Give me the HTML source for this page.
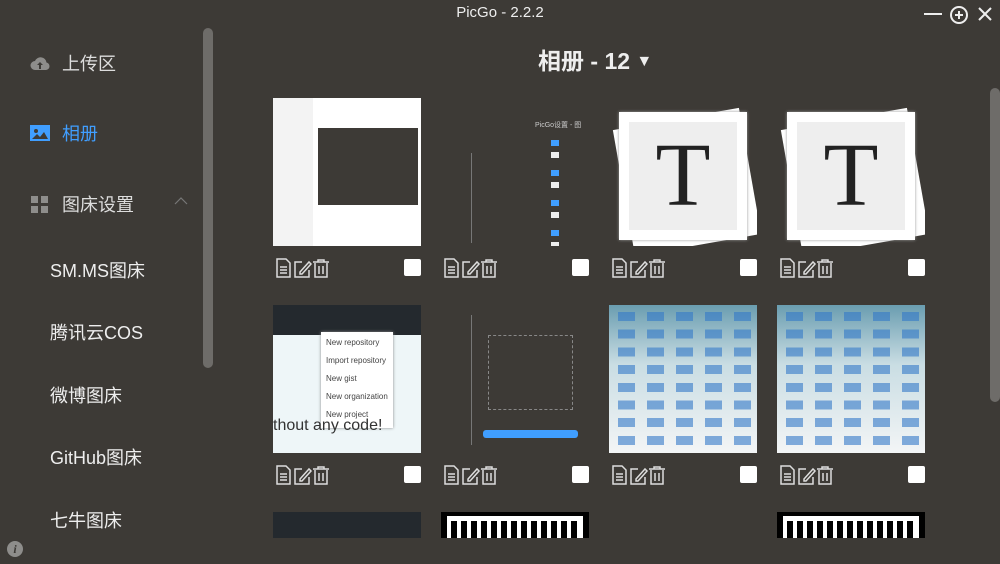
<!DOCTYPE html>
<html><head><meta charset="utf-8"><style>
*{margin:0;padding:0;box-sizing:border-box}
html,body{overflow:hidden}
body{width:1000px;height:564px;background:#3d3a36;font-family:"Liberation Sans","Noto Sans CJK SC",sans-serif;color:#ddd;position:relative;overflow:hidden}
.title{position:absolute;top:4px;left:0;width:1000px;text-align:center;font-size:15px;color:#eee}
.nav{position:absolute;left:30px;font-size:18px;color:#ddd;display:flex;align-items:center}
.nav svg{margin-right:12px}
.sub{position:absolute;left:50px;font-size:18px;color:#eee}
.sb{position:absolute;background:#6e6c69;border-radius:5px}
.h{position:absolute;top:42px;left:538px;font-size:23px;color:#eee;font-weight:bold}
.t{position:absolute;width:148px;height:148px;overflow:hidden}
.cb{position:absolute;width:17px;height:17px;background:#fff;border-radius:2px}
.clip{position:absolute;left:230px;top:0;width:760px;height:538px;overflow:hidden}
</style></head><body>
<div class="title">PicGo - 2.2.2</div>
<svg style="position:absolute;left:922px;top:4px" width="72" height="22">
<line x1="2" y1="10" x2="20" y2="10" stroke="#eee" stroke-width="2"/>
<circle cx="37" cy="11" r="8" fill="none" stroke="#eee" stroke-width="2"/><line x1="33" y1="11" x2="41" y2="11" stroke="#eee" stroke-width="2"/><line x1="37" y1="7" x2="37" y2="15" stroke="#eee" stroke-width="2"/>
<line x1="57" y1="4" x2="69" y2="16" stroke="#eee" stroke-width="2"/><line x1="69" y1="4" x2="57" y2="16" stroke="#eee" stroke-width="2"/></svg>

<div class="nav" style="top:50px"><svg width="20" height="16"><path d="M5 15a4.5 4.5 0 0 1 0-9 6 6 0 0 1 11.5 1.5A3.8 3.8 0 0 1 16 15z" fill="#8e8d8b"/><path d="M10 7l-3 3h2v4h2v-4h2z" fill="#3d3a36"/></svg>上传区</div>
<div class="nav" style="top:120px;color:#409eff"><svg width="20" height="16"><rect width="20" height="16" fill="#409eff"/><circle cx="6" cy="6" r="2" fill="#3d3a36"/><path d="M2 14l5-5 3 3 4-5 4 7z" fill="#3d3a36"/></svg>相册</div>
<div class="nav" style="top:191px"><svg width="20" height="18"><rect x="1" y="1" width="7" height="7" fill="#8e8d8b"/><rect x="11" y="1" width="7" height="7" fill="#8e8d8b"/><rect x="1" y="11" width="7" height="7" fill="#8e8d8b"/><rect x="11" y="11" width="7" height="7" fill="#8e8d8b"/></svg>图床设置</div>
<svg style="position:absolute;left:174px;top:197px" width="14" height="8"><path d="M1 7l6-6 6 6" fill="none" stroke="#777" stroke-width="1.2"/></svg>
<div class="sub" style="top:257px">SM.MS图床</div>
<div class="sub" style="top:319px">腾讯云COS</div>
<div class="sub" style="top:382px">微博图床</div>
<div class="sub" style="top:444px">GitHub图床</div>
<div class="sub" style="top:507px">七牛图床</div>
<div class="sb" style="left:203px;top:28px;width:10px;height:340px"></div>
<div style="position:absolute;left:7px;top:541px;width:16px;height:16px;border-radius:50%;background:#8e8d8b;color:#3d3a36;font-size:12px;font-style:italic;font-weight:bold;text-align:center;line-height:16px;font-family:'Liberation Serif',serif">i</div>
<div class="sb" style="left:990px;top:88px;width:10px;height:314px"></div>

<div class="h">相册 - 12 <span style="font-size:16px;position:relative;top:-3px">▼</span></div>

<div class="clip">
<div class="t" style="left:43px;top:98px;background:#fff"><div style="position:absolute;left:0;top:0;width:40px;height:148px;background:#f3f3f3"></div><div style="position:absolute;left:45px;top:30px;width:100px;height:77px;background:#3d3a36"></div></div>
<div class="t" style="left:211px;top:98px;background:#3d3a36"><div style="position:absolute;left:94px;top:22px;color:#ccc;font-size:7px">PicGo设置 - 图</div><div style="position:absolute;left:110px;top:30px;width:8px;height:120px;background:repeating-linear-gradient(#3d3a36 0 12px,#409eff 12px 18px,#3d3a36 18px 24px,#eee 24px 30px)"></div><div style="position:absolute;left:30px;top:55px;width:1px;height:90px;background:#777"></div></div>
<div class="t" style="left:379px;top:98px;background:#3d3a36"><div style="position:absolute;left:14px;top:20px;width:128px;height:128px;background:#fff;transform:rotate(-10deg)"></div><div style="position:absolute;left:10px;top:14px;width:128px;height:128px;background:#fff;box-shadow:0 0 3px #999"></div><div style="position:absolute;left:20px;top:24px;width:108px;height:108px;background:#eee;font-family:'Liberation Serif',serif;font-size:90px;color:#222;text-align:center;line-height:108px">T</div></div>
<div class="t" style="left:547px;top:98px;background:#3d3a36"><div style="position:absolute;left:14px;top:20px;width:128px;height:128px;background:#fff;transform:rotate(-10deg)"></div><div style="position:absolute;left:10px;top:14px;width:128px;height:128px;background:#fff;box-shadow:0 0 3px #999"></div><div style="position:absolute;left:20px;top:24px;width:108px;height:108px;background:#eee;font-family:'Liberation Serif',serif;font-size:90px;color:#222;text-align:center;line-height:108px">T</div></div>
<div class="t" style="left:43px;top:305px;background:#eef6f8"><div style="height:30px;background:#24292e"></div><div style="position:absolute;left:48px;top:27px;width:72px;height:96px;background:#fff;box-shadow:0 0 3px #888;font-size:8px;color:#444;line-height:18px;padding:2px 5px">New repository<br>Import repository<br>New gist<br>New organization<br>New project</div><div style="position:absolute;left:0;top:112px;font-size:16px;color:#333">thout any code!</div></div>
<div class="t" style="left:211px;top:305px;background:#3d3a36"><div style="position:absolute;left:47px;top:30px;width:85px;height:75px;border:1px dashed #888"></div><div style="position:absolute;left:42px;top:125px;width:95px;height:8px;background:#409eff;border-radius:3px"></div><div style="position:absolute;left:30px;top:10px;width:1px;height:130px;background:#777"></div></div>
<div class="t" style="left:379px;top:305px;background:linear-gradient(#6a9db0,#c9dde3 40%,#f3f5f6);"><div style="position:absolute;inset:4px;background:repeating-linear-gradient(90deg,transparent 0 5px,rgba(50,120,200,.6) 5px 22px,transparent 22px 29px);-webkit-mask:repeating-linear-gradient(transparent 0 3px,#000 3px 12px,transparent 12px 17.7px);mask:repeating-linear-gradient(transparent 0 3px,#000 3px 12px,transparent 12px 17.7px)"></div></div>
<div class="t" style="left:547px;top:305px;background:linear-gradient(#6a9db0,#c9dde3 40%,#f3f5f6);"><div style="position:absolute;inset:4px;background:repeating-linear-gradient(90deg,transparent 0 5px,rgba(50,120,200,.6) 5px 22px,transparent 22px 29px);-webkit-mask:repeating-linear-gradient(transparent 0 3px,#000 3px 12px,transparent 12px 17.7px);mask:repeating-linear-gradient(transparent 0 3px,#000 3px 12px,transparent 12px 17.7px)"></div></div>
<div class="t" style="left:43px;top:512px;background:#24292e"></div>
<div class="t" style="left:211px;top:512px;background:#000"><div style="position:absolute;left:6px;top:4px;right:6px;bottom:0;background:#fff"></div><div style="position:absolute;left:10px;top:9px;width:130px;height:20px;background:repeating-linear-gradient(90deg,#000 0 6px,#fff 6px 10px)"></div></div>
<div class="t" style="left:379px;top:512px;background:#3d3a36"></div>
<div class="t" style="left:547px;top:512px;background:#000"><div style="position:absolute;left:6px;top:4px;right:6px;bottom:0;background:#fff"></div><div style="position:absolute;left:10px;top:9px;width:130px;height:20px;background:repeating-linear-gradient(90deg,#000 0 6px,#fff 6px 10px)"></div></div>
</div>

<svg width="0" height="0" style="position:absolute"><defs><g id="ic" fill="none" stroke="#ddd" stroke-width="1.5"><path d="M3 1h9l4 4v14H3z"/><path d="M6 9h7M6 12h7M6 15h7"/><path d="M28 4h-7v15h14v-7"/><path d="M26 14l9-10 2 2-9 10h-2z"/><path d="M39 4h16M44 4V2h6v2M41 5v14h12V5M45 8v8M49 8v8"/></g></defs></svg>
<svg style="position:absolute;left:274px;top:258px" width="60" height="22"><use href="#ic"/></svg>
<svg style="position:absolute;left:442px;top:258px" width="60" height="22"><use href="#ic"/></svg>
<svg style="position:absolute;left:610px;top:258px" width="60" height="22"><use href="#ic"/></svg>
<svg style="position:absolute;left:778px;top:258px" width="60" height="22"><use href="#ic"/></svg>
<svg style="position:absolute;left:274px;top:465px" width="60" height="22"><use href="#ic"/></svg>
<svg style="position:absolute;left:442px;top:465px" width="60" height="22"><use href="#ic"/></svg>
<svg style="position:absolute;left:610px;top:465px" width="60" height="22"><use href="#ic"/></svg>
<svg style="position:absolute;left:778px;top:465px" width="60" height="22"><use href="#ic"/></svg>
<div class="cb" style="left:404px;top:259px"></div><div class="cb" style="left:572px;top:259px"></div><div class="cb" style="left:740px;top:259px"></div><div class="cb" style="left:908px;top:259px"></div>
<div class="cb" style="left:404px;top:466px"></div><div class="cb" style="left:572px;top:466px"></div><div class="cb" style="left:740px;top:466px"></div><div class="cb" style="left:908px;top:466px"></div>
</body></html>
